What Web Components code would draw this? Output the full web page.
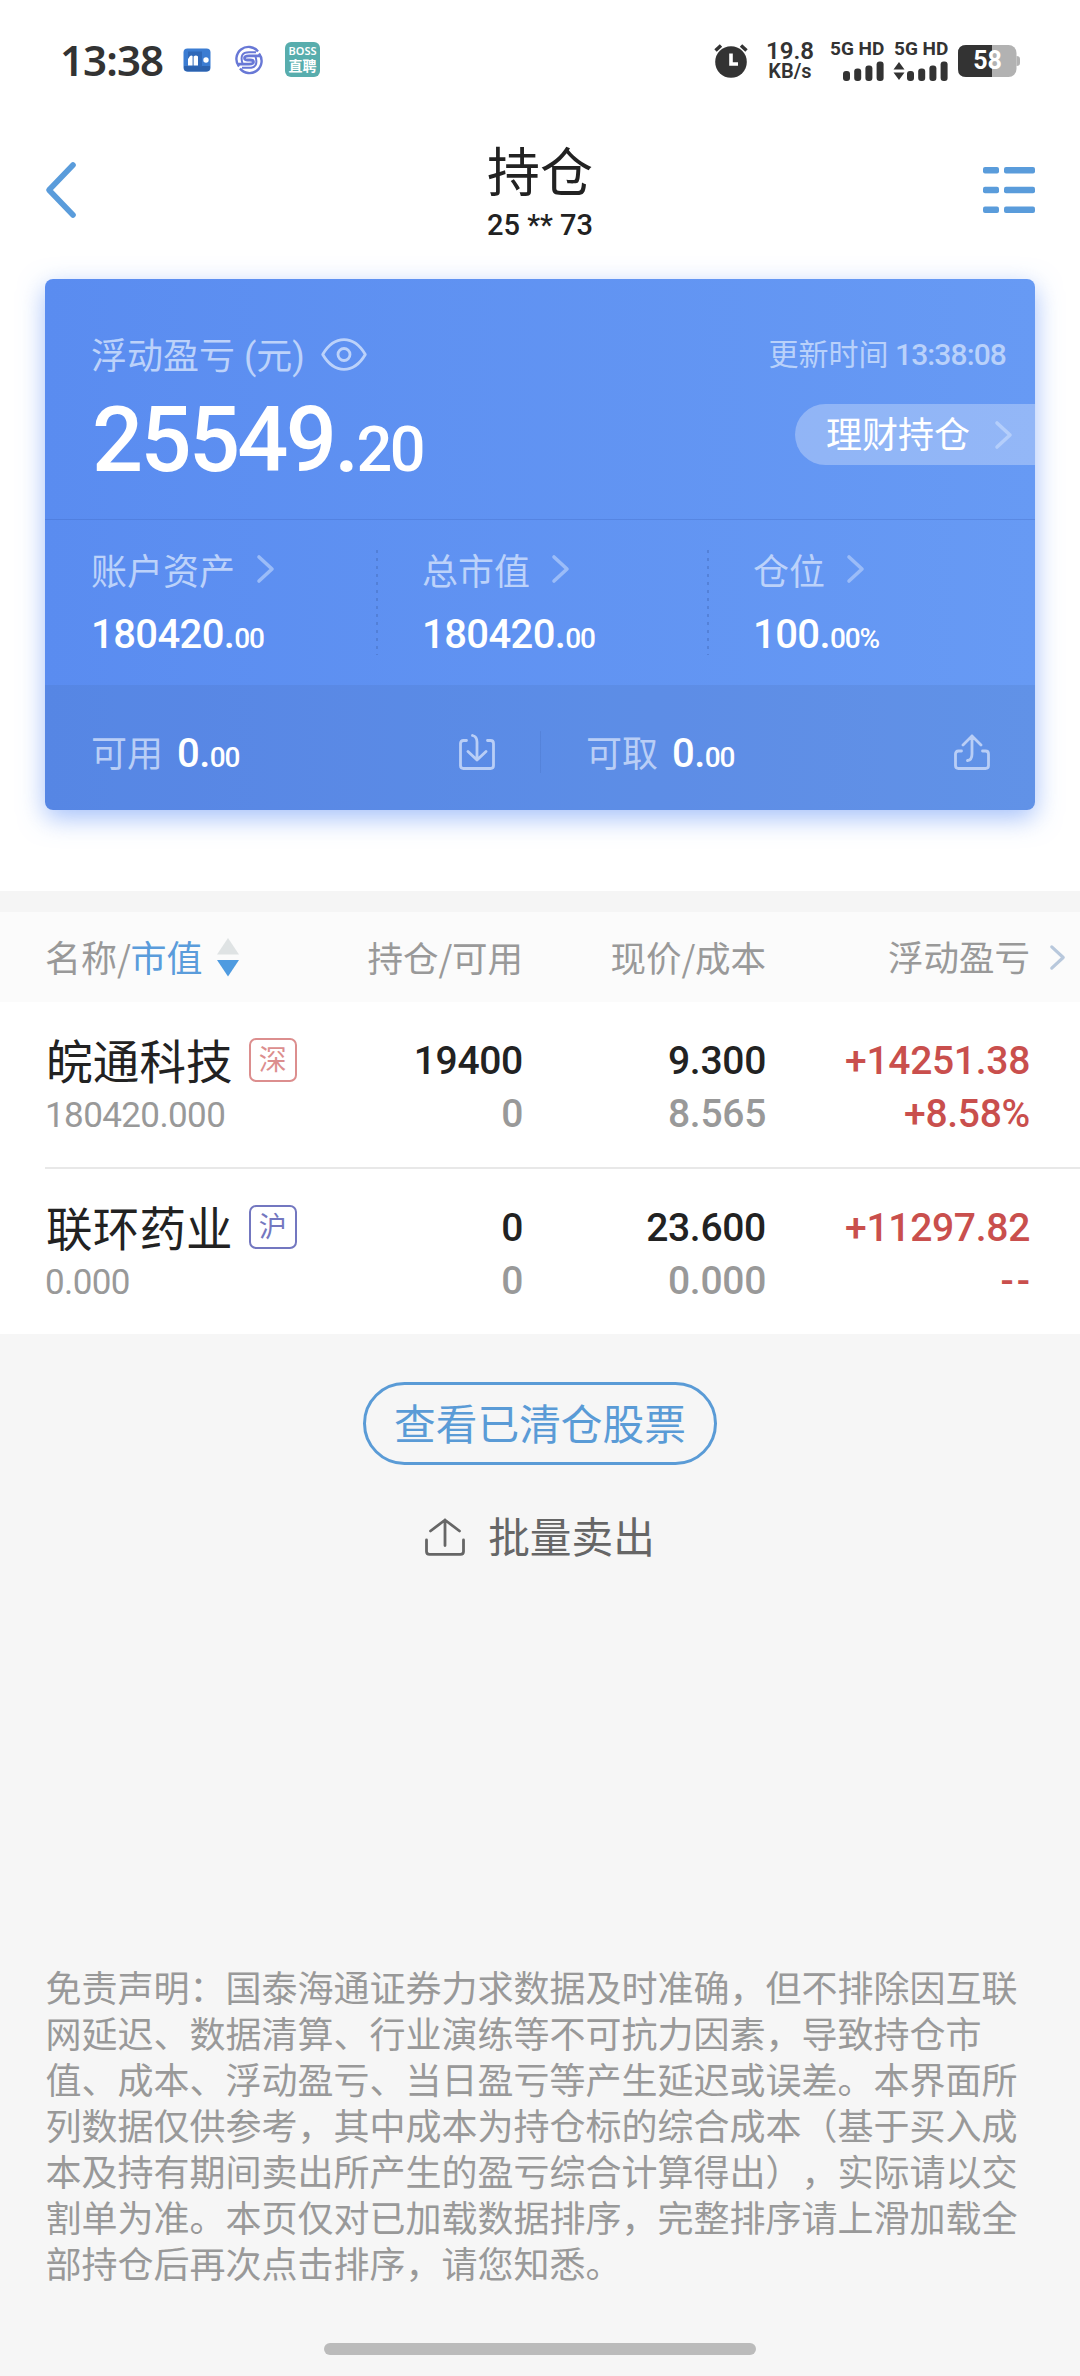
<!DOCTYPE html>
<html lang="zh-CN">
<head>
<meta charset="utf-8">
<title>持仓</title>
<style>
    body{
        margin: 0;
        background: #f6f6f6;
        font-family: Roboto, "Noto Sans CJK SC", sans-serif;
        color: #222;
    }
</style>
</head>
<body>
<position-page></position-page>

<script>
const ICONS = {
    back: ["0 0 31 56", `<path d="M28 3 4 28 28 53" stroke-width="5.6"/>`],
    menu: ["0 0 52 46", `<g fill="currentColor" stroke="none"><rect width="16" height="6.5" rx="2"/><rect x="21" width="31" height="6.5" rx="2"/><rect y="19.7" width="16" height="6.5" rx="2"/><rect x="21" y="19.7" width="31" height="6.5" rx="2"/><rect y="39.5" width="16" height="6.5" rx="2"/><rect x="21" y="39.5" width="31" height="6.5" rx="2"/></g>`],
    right: ["0 0 17 28", `<path d="M2 2 15 14 2 26" stroke-width="3.6"/>`],
    eye: ["0 0 46 33", `<path d="M1.7 16.5C7 7.5 14 1.7 23 1.7S39 7.5 44.3 16.5C39 25.5 32 31.3 23 31.3S7 25.5 1.7 16.5Z" stroke-width="2.8"/><circle cx="23" cy="16.5" r="6" stroke-width="2.8"/>`],
    trayIn: ["0 0 36 36", `<path d="M7.5 6.5H4.5Q1.5 6.5 1.5 9.5V31.5Q1.5 34.5 4.5 34.5H31.5Q34.5 34.5 34.5 31.5V9.5Q34.5 6.5 31.5 6.5H28.5M13.5 1.5Q18 2.5 18 8V26M9 17.5 18 26 27 17.5" stroke-width="2.8"/>`],
    trayOut: ["0 0 36 36", `<path d="M7.5 17H4.5Q1.5 17 1.5 20V31.5Q1.5 34.5 4.5 34.5H31.5Q34.5 34.5 34.5 31.5V20Q34.5 17 31.5 17H28.5M13.5 26.5Q18 26 18 20V2M9 11 18 2 27 11" stroke-width="2.8"/>`],
    sell: ["0 0 40 38", `<path d="M1.5 22V33.5Q1.5 36.3 4.5 36.3H35.5Q38.5 36.3 38.5 33.5V22M20 27.5V2M5.5 13 20 2 34.5 13" stroke-width="2.8"/>`],
    alarm: ["0 0 34 34", `<circle cx="17" cy="18" r="15.8" fill="currentColor" stroke="none"/><path d="M1.5 6.5 7 1.5M32.5 6.5 27 1.5" stroke-width="3.5" stroke-linecap="butt"/><path d="M17 9.5V20H24" stroke="#fff" stroke-width="3.6" stroke-linecap="butt" stroke-linejoin="miter"/>`],
    sort: ["0 0 24 40", `<path d="M12 1 23 17.5H1Z" fill="#dfe3e4" stroke="none"/><path d="M1 23H23L12 39.5Z" fill="#4f9be0" stroke="none"/>`],
    bank: ["0 0 28 24", `<rect x=".5" y=".5" width="27" height="23" rx="4" fill="#3b7cd2" stroke="none"/><path d="M1 18H27V20Q27 23.5 23 23.5H5Q1 23.5 1 20Z" fill="#2c62ae" stroke="none"/><rect x="5" y="3.5" width="14" height="15" fill="#2f68b8" stroke="none"/><path d="M5 11 7 8Q8.5 7 9.6 8V17.5H5ZM10.6 8.5Q13 6.5 15 8.5V17.5H10.6Z" fill="#fff" stroke="none"/><circle cx="23" cy="12" r="2.7" fill="#fff" stroke="none"/>`],
    swirl: ["0 0 26 26", `<g stroke="#6878d6" stroke-width="2.4" stroke-linecap="butt"><path d="M3 19.5A11.7 11.7 0 0 1 22 4.5M23 6.5A11.7 11.7 0 0 1 4 21.5"/><path d="M25 8.8H13Q8.5 8.8 8.5 11T12 13H14Q17.5 13 17.5 15T13 17.2H1" stroke-width="2.8"/><path d="M6.500 16.500Q3 5.200 13 5.200H20M19.500 9.500Q23 20.800 13 20.800H6" stroke-width="2"/></g>`],
    signal: ["0 0 41 20", `<g fill="currentColor" stroke="none"><rect y="10" width="7" height="10" rx="3"/><rect x="11.2" y="7.5" width="7" height="12.5" rx="3"/><rect x="22.4" y="4.5" width="7" height="15.5" rx="3"/><rect x="33.6" y=".5" width="7" height="19.5" rx="3"/></g>`],
    traffic: ["0 0 12 18", `<path d="M6 0 11.5 7.5H.5ZM6 18 .5 10.5H11.5Z" fill="currentColor" stroke="none"/>`],
    battery: ["0 0 62 32", `<rect width="58.5" height="32" rx="8" fill="#b2b2b2" stroke="none"/><path d="M58.5 11Q62 11 62 14V18Q62 21 58.5 21Z" fill="#b2b2b2" stroke="none"/><path d="M34 0V32H8Q0 32 0 24V8Q0 0 8 0Z" fill="#333" stroke="none"/>`]
};

class AppIcon extends HTMLElement{
    constructor(){
        super();
        this.attachShadow({ mode: 'open' });
    }

    connectedCallback(){
        const [box, shape] = ICONS[this.getAttribute("name")];
        const [, , w, h] = box.split(" ");
        this.shadowRoot.innerHTML = `
            <style>
                :host{ display: block; flex: none; width: ${w}px; height: ${h}px; }
                svg{ display: block; width: 100%; height: 100%; overflow: visible; }
            </style>
            <svg viewBox="${box}" fill="none" stroke="currentColor" stroke-linecap="round" stroke-linejoin="round">${shape}</svg>
        `;
    }
}

// amount with a smaller decimal part
class MoneyText extends HTMLElement{
    constructor(){
        super();
        this.attachShadow({ mode: 'open' });
    }

    connectedCallback(){
        const [whole, cents] = this.getAttribute("value").split(".");
        this.shadowRoot.innerHTML = `
            <style>
                :host{
                    display: block;
                    font-size: 40px;
                    line-height: 40px;
                    font-weight: 500;
                    letter-spacing: -.015em;
                    color: #fff;
                    white-space: nowrap;
                }
                small{ font-size: .7em; font-weight: 500; letter-spacing: -.04em; }
            </style>
            ${whole}.<small>${cents}</small>
        `;
    }
}

class StatusBar extends HTMLElement{
    constructor(){
        super();
        this.attachShadow({ mode: 'open' });
    }

    connectedCallback(){
        this.shadowRoot.innerHTML = `
            <style>
                :host{
                    display: flex;
                    align-items: center;
                    height: 119px;
                    padding: 0 60px;
                    color: #333;
                    background: #fff;
                }
                time{
                    font: 600 42px/50px "Noto Sans", sans-serif;
                    width: 104px;
                    letter-spacing: -.9px;
                    margin-right: 19px;
                    white-space: nowrap;
                }
                .boss{
                    width: 35px;
                    height: 35px;
                    margin-left: 23px;
                    border-radius: 6px;
                    background: #58adad;
                    color: #fff;
                    text-align: center;
                    font: 600 11px/14px "Noto Sans", sans-serif;
                    padding-top: 2px;
                    box-sizing: border-box;
                }
                .boss b{ display: block; font: 600 14px/15px "Noto Sans CJK SC", sans-serif; }
                .right{ display: flex; align-items: center; margin-left: auto; padding-top: 2px; }
                .speed{
                    width: 48px;
                    margin: 0 16px 0 18px;
                    font: 600 24px/22px Roboto, sans-serif;
                    text-align: center;
                    white-space: nowrap;
                }
                .speed span{ display: block; font-size: 20px; line-height: 19px; }
                .sim{ width: 54px; margin-right: 10px; font: 700 19px/18px Roboto, sans-serif; white-space: nowrap; }
                .bars{ display: flex; align-items: center; justify-content: flex-end; gap: 2px; margin-top: 3px; }
                .battery{ display: grid; }
                .battery > *{ grid-area: 1 / 1; }
                .battery span{
                    font: 700 25px/32px Roboto, sans-serif;
                    text-align: center;
                    width: 59px;
                    color: #fff;
                    position: relative;
                }
            </style>
            <time>13:38</time>
            <app-icon name="bank"></app-icon>
            <app-icon name="swirl" style="margin-left: 25px"></app-icon>
            <div class="boss">BOSS<b>直聘</b></div>
            <div class="right">
                <app-icon name="alarm"></app-icon>
                <div class="speed">19.8<span>KB/s</span></div>
                <div class="sim">5G HD<div class="bars"><app-icon name="signal"></app-icon></div></div>
                <div class="sim">5G HD<div class="bars"><app-icon name="traffic"></app-icon><app-icon name="signal"></app-icon></div></div>
                <div class="battery"><app-icon name="battery"></app-icon><span>58</span></div>
            </div>
        `;
    }
}

class PageHeader extends HTMLElement{
    constructor(){
        super();
        this.attachShadow({ mode: 'open' });
    }

    connectedCallback(){
        this.shadowRoot.innerHTML = `
            <style>
                :host{
                    display: grid;
                    grid-template-columns: 1fr auto 1fr;
                    align-items: center;
                    height: 141px;
                    padding: 0 45px;
                    background: #fff;
                }
                app-icon{ color: #5a9cdb; }
                app-icon:last-child{ justify-self: end; }
                .title{ text-align: center; }
                h1{ margin: 0 0 6px; padding-top: 4px; font-size: 53px; line-height: 60px; font-weight: 400; }
                p{ margin: 0; font-size: 29px; line-height: 30px; font-weight: 500; }
            </style>
            <app-icon name="back"></app-icon>
            <div class="title">
                <h1><slot></slot></h1>
                <p><slot name="account"></slot></p>
            </div>
            <app-icon name="menu"></app-icon>
        `;
    }
}

class StatItem extends HTMLElement{
    constructor(){
        super();
        this.attachShadow({ mode: 'open' });
    }

    connectedCallback(){
        this.shadowRoot.innerHTML = `
            <style>
                :host{ display: block; padding: 29px 0 0 46px; }
                .label{
                    display: flex;
                    align-items: center;
                    gap: 22px;
                    height: 40px;
                    margin-bottom: 26px;
                    font-size: 36px;
                    line-height: 40px;
                    color: #bcd2fa;
                }
                slot{ display: block; padding-top: 7px; }
                app-icon{ color: #9bbcf8; }
            </style>
            <div class="label"><slot></slot><app-icon name="right"></app-icon></div>
            <money-text value="${this.getAttribute("value")}"></money-text>
        `;
    }
}

class CashItem extends HTMLElement{
    constructor(){
        super();
        this.attachShadow({ mode: 'open' });
    }

    connectedCallback(){
        this.shadowRoot.innerHTML = `
            <style>
                :host{
                    display: flex;
                    align-items: center;
                    padding: 9px 45px 0 46px;
                    font-size: 36px;
                    line-height: 40px;
                    color: #b9cef6;
                }
                slot{ display: block; padding-top: 6px; }
                money-text{ margin: 7px auto 0 14px; }
            </style>
            <slot></slot>
            <money-text value="${this.getAttribute("value")}"></money-text>
            <app-icon name="${this.getAttribute("icon")}"></app-icon>
        `;
    }
}

class AssetCard extends HTMLElement{
    constructor(){
        super();
        this.attachShadow({ mode: 'open' });
    }

    connectedCallback(){
        this.shadowRoot.innerHTML = `
            <style>
                :host{ display: block; padding: 19px 45px 81px; background: #fff; }
                .card{
                    height: 531px;
                    border-radius: 8px;
                    overflow: hidden;
                    background: linear-gradient(90deg, #5a8cf0, #679af4);
                    box-shadow: 0 8px 26px rgba(90, 140, 245, .55);
                }
                .top{
                    display: flex;
                    justify-content: space-between;
                    height: 241px;
                    box-sizing: border-box;
                    padding: 55px 0 0 46px;
                    border-bottom: 1px solid rgba(60, 100, 190, .3);
                }
                .label{
                    display: flex;
                    align-items: center;
                    height: 40px;
                    gap: 16px;
                    font-size: 36px;
                    line-height: 40px;
                    color: #bcd2fa;
                    white-space: nowrap;
                }
                .label span{ padding-top: 5px; }
                .total{ font-size: 90px; line-height: 90px; margin: 22px 0 0 1px; letter-spacing: -.03em; }
                .side{ display: flex; flex-direction: column; align-items: flex-end; }
                .time{
                    margin: 1px 29px 29px 0;
                    font-size: 30px;
                    line-height: 40px;
                    color: #b9d1fa;
                    white-space: nowrap;
                    word-spacing: -1px;
                }
                .time span{ font-weight: 500; letter-spacing: -.9px; }
                .pill{
                    display: flex;
                    align-items: center;
                    gap: 25px;
                    box-sizing: border-box;
                    width: 240px;
                    height: 61px;
                    padding-left: 31px;
                    border-radius: 31px 0 0 31px;
                    background: rgba(255, 255, 255, .29);
                    color: #fff;
                    font-size: 36px;
                    line-height: 61px;
                }
                .pill span{ padding-top: 4px; }
                .pill app-icon{ color: #b4cefb; }
                .stats{ display: grid; grid-template-columns: 331px 331px 1fr; height: 165px; }
                .stats stat-item + stat-item{
                    background: repeating-linear-gradient(rgba(70, 110, 190, .5) 0 3px, transparent 3px 8px) -1px 30px / 3px 105px no-repeat;
                }
                .cash{
                    display: grid;
                    grid-template-columns: 1fr 1fr;
                    height: 125px;
                    background: rgba(70, 100, 160, .15);
                }
                .cash cash-item + cash-item{
                    background: linear-gradient(rgba(70, 110, 190, .3) 0 0) 0 46px / 1px 42px no-repeat;
                }
            </style>
            <div class="card">
                <div class="top">
                    <div>
                        <div class="label"><span>浮动盈亏 (元)</span><app-icon name="eye"></app-icon></div>
                        <money-text class="total" value="25549.20"></money-text>
                    </div>
                    <div class="side">
                        <div class="time">更新时间 <span>13:38:08</span></div>
                        <div class="pill"><span>理财持仓</span><app-icon name="right"></app-icon></div>
                    </div>
                </div>
                <div class="stats">
                    <stat-item value="180420.00">账户资产</stat-item>
                    <stat-item value="180420.00">总市值</stat-item>
                    <stat-item value="100.00%">仓位</stat-item>
                </div>
                <div class="cash">
                    <cash-item value="0.00" icon="trayIn">可用</cash-item>
                    <cash-item value="0.00" icon="trayOut">可取</cash-item>
                </div>
            </div>
        `;
    }
}

class HoldingHead extends HTMLElement{
    constructor(){
        super();
        this.attachShadow({ mode: 'open' });
    }

    connectedCallback(){
        this.shadowRoot.innerHTML = `
            <style>
                :host{
                    display: grid;
                    grid-template-columns: 300px 1fr 243px 264px 50px;
                    align-items: center;
                    height: 90px;
                    padding-left: 45px;
                    border-top: 21px solid #f5f5f5;
                    background: #fbfbfb;
                    color: #999;
                    font-size: 35.5px;
                    line-height: 40px;
                    text-align: right;
                }
                div{ padding-top: 3px; }
                .name{ display: flex; align-items: center; padding-top: 0; font-size: 36px; }
                .name span{ padding-top: 3px; }
                em{ font-style: normal; color: #5a9cdb; }
                .name app-icon{ margin-left: 14px; }
                i{ font: 400 35.5px/40px "Noto Sans CJK SC", sans-serif; letter-spacing: -.5px; }
                .more{ color: #b8c8dc; width: 15px; height: 25px; margin-left: 20px; }
            </style>
            <div class="name"><span>名称<i>/</i><em>市值</em></span><app-icon name="sort"></app-icon></div>
            <div>持仓<i>/</i>可用</div>
            <div>现价<i>/</i>成本</div>
            <div>浮动盈亏</div>
            <app-icon class="more" name="right"></app-icon>
        `;
    }
}

class HoldingRow extends HTMLElement{
    constructor(){
        super();
        this.attachShadow({ mode: 'open' });
    }

    connectedCallback(){
        this.shadowRoot.innerHTML = `
            <style>
                :host{
                    display: grid;
                    grid-template-columns: 300px 1fr 243px 264px 50px;
                    height: 165px;
                    padding-left: 45px;
                    background: #fff;
                    text-align: right;
                    font-size: 39px;
                    line-height: 53px;
                    font-weight: 500;
                    letter-spacing: -.3px;
                }
                .cell{ padding-top: 33px; }
                .cell.name{ padding-top: 31px; text-align: left; }
                .title{ display: flex; align-items: center; height: 53px; font-size: 46.5px; font-weight: 400; letter-spacing: .2px; }
                .title > slot{ display: block; padding: 8px 0 0 1px; }
                .tag{
                    box-sizing: border-box;
                    width: 48px;
                    height: 44px;
                    margin: 1px 0 0 16px;
                    border: 2px solid;
                    border-radius: 7px;
                    text-align: center;
                    font-size: 28px;
                    line-height: 42px;
                    color: var(--tag-color, #dc8e8e);
                }
                .worth{ font-size: 35px; line-height: 60px; font-weight: 450; letter-spacing: -.6px; }
                .worth, .sub{ color: #999; }
                .profit{ color: #c94f4d; }
            </style>
            <div class="cell name">
                <div class="title"><slot></slot><span class="tag"><slot name="market"></slot></span></div>
                <div class="worth"><slot name="worth"></slot></div>
            </div>
            <div class="cell"><slot name="amount"></slot><div class="sub"><slot name="usable"></slot></div></div>
            <div class="cell"><slot name="price"></slot><div class="sub"><slot name="cost"></slot></div></div>
            <div class="cell profit"><slot name="profit"></slot><div><slot name="rate"></slot></div></div>
        `;
    }
}

class PageActions extends HTMLElement{
    constructor(){
        super();
        this.attachShadow({ mode: 'open' });
    }

    connectedCallback(){
        this.shadowRoot.innerHTML = `
            <style>
                :host{ display: flex; flex-direction: column; align-items: center; padding-top: 48px; }
                button{
                    box-sizing: border-box;
                    width: 354px;
                    height: 83px;
                    padding: 4px 0 0;
                    border: 3px solid #5a9bd6;
                    border-radius: 42px;
                    background: none;
                    color: #5a9bd6;
                    font: 400 41.7px/73px Roboto, "Noto Sans CJK SC", sans-serif;
                }
                .sell{
                    display: flex;
                    align-items: center;
                    gap: 23px;
                    height: 50px;
                    margin-top: 45px;
                    font-size: 41.7px;
                    line-height: 50px;
                    color: #666;
                }
                .sell app-icon{ margin-top: 3px; }
                .sell span{ padding-top: 8px; }
            </style>
            <button>查看已清仓股票</button>
            <div class="sell"><app-icon name="sell"></app-icon><span>批量卖出</span></div>
        `;
    }
}

class PositionPage extends HTMLElement{
    constructor(){
        super();
        this.attachShadow({ mode: 'open' });
    }

    connectedCallback(){
        this.shadowRoot.innerHTML = `
            <style>
                :host{ display: flex; flex-direction: column; width: 1080px; height: 2376px; overflow: hidden; }
                .line{ height: 2px; background: #e8e8e8; border-left: 45px solid #fff; }
                .notice{
                    margin: auto 0 0 45.5px;
                    font-size: 36px;
                    line-height: 46px;
                    color: #999;
                    white-space: nowrap;
                    text-spacing-trim: space-all;
                }
                .home{ width: 432px; height: 12px; margin: 54px auto 21px; border-radius: 6px; background: #bbb; }
            </style>
            <status-bar></status-bar>
            <page-header>持仓<span slot="account">25 ** 73</span></page-header>
            <asset-card></asset-card>
            <holding-head></holding-head>
            <holding-row>皖通科技
                <span slot="market">深</span><span slot="worth">180420.000</span>
                <span slot="amount">19400</span><span slot="usable">0</span>
                <span slot="price">9.300</span><span slot="cost">8.565</span>
                <span slot="profit">+14251.38</span><span slot="rate">+8.58%</span>
            </holding-row>
            <div class="line"></div>
            <holding-row style="--tag-color: #7377c0">联环药业
                <span slot="market">沪</span><span slot="worth">0.000</span>
                <span slot="amount">0</span><span slot="usable">0</span>
                <span slot="price">23.600</span><span slot="cost">0.000</span>
                <span slot="profit">+11297.82</span><span slot="rate" style="letter-spacing: 3px; margin-right: -3px">--</span>
            </holding-row>
            <page-actions></page-actions>
            <div class="notice">
                免责声明：国泰海通证券力求数据及时准确，但不排除因互联<br>
                网延迟、数据清算、行业演练等不可抗力因素，导致持仓市<br>
                值、成本、浮动盈亏、当日盈亏等产生延迟或误差。本界面所<br>
                列数据仅供参考，其中成本为持仓标的综合成本（基于买入成<br>
                本及持有期间卖出所产生的盈亏综合计算得出），实际请以交<br>
                割单为准。本页仅对已加载数据排序，完整排序请上滑加载全<br>
                部持仓后再次点击排序，请您知悉。
            </div>
            <div class="home"></div>
        `;
    }
}

customElements.define('app-icon', AppIcon);
customElements.define('money-text', MoneyText);
customElements.define('status-bar', StatusBar);
customElements.define('page-header', PageHeader);
customElements.define('stat-item', StatItem);
customElements.define('cash-item', CashItem);
customElements.define('asset-card', AssetCard);
customElements.define('holding-head', HoldingHead);
customElements.define('holding-row', HoldingRow);
customElements.define('page-actions', PageActions);
customElements.define('position-page', PositionPage);
</script>
</body>
</html>
